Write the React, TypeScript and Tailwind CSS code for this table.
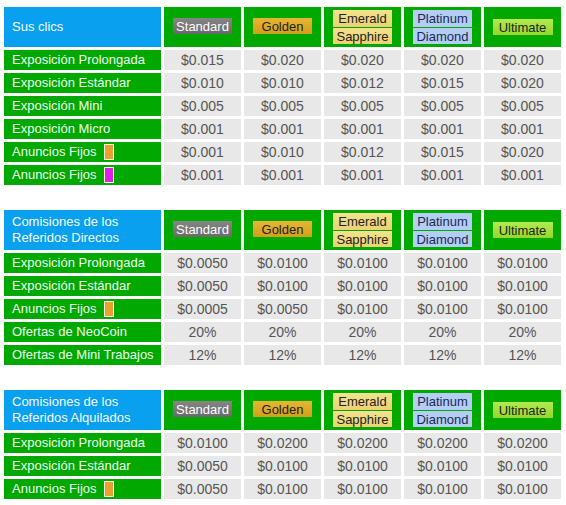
import React from 'react';

type Row = { label: string; tag?: 'orange' | 'purple'; values: string[] };

const clicks: Row[] = [
  { label: 'Exposición Prolongada', values: ['$0.015', '$0.020', '$0.020', '$0.020', '$0.020'] },
  { label: 'Exposición Estándar', values: ['$0.010', '$0.010', '$0.012', '$0.015', '$0.020'] },
  { label: 'Exposición Mini', values: ['$0.005', '$0.005', '$0.005', '$0.005', '$0.005'] },
  { label: 'Exposición Micro', values: ['$0.001', '$0.001', '$0.001', '$0.001', '$0.001'] },
  { label: 'Anuncios Fijos', tag: 'orange', values: ['$0.001', '$0.010', '$0.012', '$0.015', '$0.020'] },
  { label: 'Anuncios Fijos', tag: 'purple', values: ['$0.001', '$0.001', '$0.001', '$0.001', '$0.001'] },
];

const direct: Row[] = [
  { label: 'Exposición Prolongada', values: ['$0.0050', '$0.0100', '$0.0100', '$0.0100', '$0.0100'] },
  { label: 'Exposición Estándar', values: ['$0.0050', '$0.0100', '$0.0100', '$0.0100', '$0.0100'] },
  { label: 'Anuncios Fijos', tag: 'orange', values: ['$0.0005', '$0.0050', '$0.0100', '$0.0100', '$0.0100'] },
  { label: 'Ofertas de NeoCoin', values: ['20%', '20%', '20%', '20%', '20%'] },
  { label: 'Ofertas de Mini Trabajos', values: ['12%', '12%', '12%', '12%', '12%'] },
];

const rented: Row[] = [
  { label: 'Exposición Prolongada', values: ['$0.0100', '$0.0200', '$0.0200', '$0.0200', '$0.0200'] },
  { label: 'Exposición Estándar', values: ['$0.0050', '$0.0100', '$0.0100', '$0.0100', '$0.0100'] },
  { label: 'Anuncios Fijos', tag: 'orange', values: ['$0.0050', '$0.0100', '$0.0100', '$0.0100', '$0.0100'] },
];

function Badge({ label, className }: { label: string; className: string }) {
  return (
    <div className={`w-[59px] h-[16px] flex items-center justify-center leading-none ${className}`}>
      {label}
    </div>
  );
}

function HeaderRow({ title }: { title: React.ReactNode }) {
  return (
    <div className="flex gap-[3px] h-[40px]">
      <div className="w-[157px] bg-[#0aa0f0] text-[#f4fbff] pl-2 flex items-center leading-[16px]">{title}</div>
      <div className="w-[77px] bg-[#00a800] flex items-center justify-center pb-[2px]">
        <Badge label="Standard" className="bg-gradient-to-b from-[#858585] to-[#6a6a6a] text-white" />
      </div>
      <div className="w-[77px] bg-[#00a800] flex items-center justify-center pb-[2px]">
        <Badge label="Golden" className="bg-gradient-to-b from-[#e6b632] to-[#d39f18] text-[#222]" />
      </div>
      <div className="w-[77px] bg-[#00a800] flex flex-col items-center justify-center gap-px">
        <Badge label="Emerald" className="h-[17px] bg-gradient-to-b from-[#f3e28e] to-[#ecd272] text-[#222]" />
        <Badge label="Sapphire" className="bg-gradient-to-b from-[#f3e28e] to-[#ecd272] text-[#222]" />
      </div>
      <div className="w-[77px] bg-[#00a800] flex flex-col items-center justify-center gap-px">
        <Badge label="Platinum" className="h-[17px] bg-[#b4cdf4] text-[#1a2a55]" />
        <Badge label="Diamond" className="bg-[#b4cdf4] text-[#1a2a55]" />
      </div>
      <div className="w-[77px] bg-[#00a800] flex items-center justify-center">
        <Badge label="Ultimate" className="w-[60px] bg-gradient-to-b from-[#b2ea4e] to-[#94d82a] text-[#222]" />
      </div>
    </div>
  );
}

function DataRow({ row }: { row: Row }) {
  return (
    <div className="flex gap-[3px] h-[20px]">
      <div className="w-[157px] bg-[#00a800] text-[#effff0] pl-2 flex items-center gap-[7px]">
        <span>{row.label}</span>
        {row.tag && (
          <span
            className={`inline-block w-[10px] h-[16px] border border-[#f5f5dc] ${
              row.tag === 'orange' ? 'bg-[#e9a232]' : 'bg-[#e020e8]'
            }`}
          />
        )}
      </div>
      {row.values.map((v, i) => (
        <div key={i} className="w-[77px] bg-[#e8e8e8] text-[#555] text-[14px] flex items-center justify-center">
          {v}
        </div>
      ))}
    </div>
  );
}

function Section({ title, rows }: { title: React.ReactNode; rows: Row[] }) {
  return (
    <div className="flex flex-col gap-[3px]">
      <HeaderRow title={title} />
      {rows.map((r, i) => (
        <DataRow key={i} row={r} />
      ))}
    </div>
  );
}

export default function App() {
  return (
    <div
      className="w-[566px] h-[505px] bg-white pl-[4px] pt-[7px] flex flex-col gap-[25px] text-[13px]"
      style={{ fontFamily: '"Liberation Sans", Arial, sans-serif' }}
    >
      <Section title="Sus clics" rows={clicks} />
      <Section
        title={
          <span>
            Comisiones de los
            <br />
            Referidos Directos
          </span>
        }
        rows={direct}
      />
      <Section
        title={
          <span>
            Comisiones de los
            <br />
            Referidos Alquilados
          </span>
        }
        rows={rented}
      />
    </div>
  );
}
